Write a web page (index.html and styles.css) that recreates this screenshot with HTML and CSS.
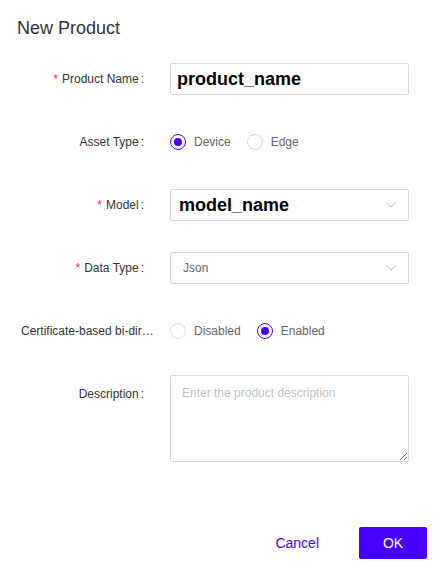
FILE: index.html
```html
<!DOCTYPE html>
<html lang="en">
<head>
<meta charset="utf-8">
<title>New Product</title>
<link rel="stylesheet" href="styles.css">
</head>
<body>
<div class="modal">
  <div class="title">New Product</div>
  <div class="form">
    <div class="row">
      <div class="label req">Product Name</div>
      <div class="control">
        <div class="box value value-input">product_name</div>
      </div>
    </div>
    <div class="row">
      <div class="label">Asset Type</div>
      <div class="control radios">
        <span class="radio"><span class="dot checked"></span><span class="rtext">Device</span></span>
        <span class="radio"><span class="dot"></span><span class="rtext">Edge</span></span>
      </div>
    </div>
    <div class="row">
      <div class="label req">Model</div>
      <div class="control">
        <div class="box select">
          <span class="value value-select">model_name</span>
          <svg class="arrow" width="10" height="6" viewBox="0 0 10 6"><path d="M0.5 0.5 L5 5 L9.5 0.5" fill="none" stroke="#bfbfbf" stroke-width="1"/></svg>
        </div>
      </div>
    </div>
    <div class="row">
      <div class="label req">Data Type</div>
      <div class="control">
        <div class="box select">
          <span class="plain">Json</span>
          <svg class="arrow" width="10" height="6" viewBox="0 0 10 6"><path d="M0.5 0.5 L5 5 L9.5 0.5" fill="none" stroke="#bfbfbf" stroke-width="1"/></svg>
        </div>
      </div>
    </div>
    <div class="row">
      <div class="label" title="Certificate-based bi-directional authentication">Certificate-based bi-directional authentication</div>
      <div class="control radios">
        <span class="radio"><span class="dot"></span><span class="rtext">Disabled</span></span>
        <span class="radio"><span class="dot checked"></span><span class="rtext">Enabled</span></span>
      </div>
    </div>
    <div class="row row-desc">
      <div class="label">Description</div>
      <div class="control">
        <textarea class="textarea" placeholder="Enter the product description"></textarea>
      </div>
    </div>
  </div>
  <div class="footer">
    <button class="btn btn-link">Cancel</button>
    <button class="btn btn-primary">OK</button>
  </div>
</div>
</body>
</html>
```

FILE: styles.css
```css
html, body {
  margin: 0;
  padding: 0;
  background: #ffffff;
}

body {
  font-family: "Liberation Sans", Arial, sans-serif;
  color: #333333;
}

.modal {
  width: 443px;
}

.title {
  padding: 16px 17px 0;
  font-size: 18px;
  line-height: 24px;
  color: #333333;
}

.form {
  margin-top: 23px;
  display: flex;
  flex-direction: column;
  gap: 31px;
}

.row {
  display: flex;
  align-items: flex-start;
}

.row-desc {
  margin-top: -3px;
}

.row-desc .label {
  margin-top: 3px;
}

.label {
  box-sizing: border-box;
  margin-left: 21px;
  width: 135px;
  flex: none;
  text-align: right;
  font-size: 12px;
  line-height: 32px;
  height: 32px;
  color: #333333;
  white-space: nowrap;
  overflow: hidden;
  text-overflow: ellipsis;
}

.label::after {
  content: ":";
  margin: 0 12px 0 2px;
}

.req::before {
  content: "*";
  color: #f5226d;
  margin-right: 4px;
  font-size: 12px;
}

.control {
  margin-left: 14px;
  width: 239px;
  flex: none;
}

.box {
  box-sizing: border-box;
  height: 32px;
  border: 1px solid #d9d9d9;
  border-radius: 2px;
  display: flex;
  align-items: center;
}

.value {
  font-size: 18px;
  font-weight: bold;
  color: #000000;
}

.value-input {
  padding-left: 6px;
}

.select {
  justify-content: space-between;
  padding-left: 8px;
  padding-right: 12px;
}

.select .plain {
  padding-left: 4px;
  font-size: 12px;
  color: #666666;
}

.arrow {
  display: block;
  flex: none;
}

.radios {
  display: flex;
  align-items: center;
  height: 32px;
}

.radio {
  display: inline-flex;
  align-items: center;
  margin-right: 8px;
}

.dot {
  box-sizing: border-box;
  width: 16px;
  height: 16px;
  border: 1px solid #d9d9d9;
  border-radius: 50%;
  display: inline-flex;
  align-items: center;
  justify-content: center;
  background: #ffffff;
}

.dot.checked {
  border-color: #4600ff;
}

.dot.checked::after {
  content: "";
  width: 8px;
  height: 8px;
  border-radius: 50%;
  background: #4600ff;
}

.rtext {
  padding: 0 8px;
  font-size: 12px;
  color: #666666;
}

.textarea {
  display: block;
  box-sizing: border-box;
  width: 239px;
  height: 87px;
  margin: 0;
  border: 1px solid #d9d9d9;
  border-radius: 2px;
  padding: 8px 11px 6px;
  font-family: "Liberation Sans", Arial, sans-serif;
  font-size: 12px;
  line-height: 18.86px;
  color: #333333;
  outline: none;
}

.textarea::placeholder {
  color: #bfbfbf;
}

.footer {
  margin-top: 65px;
  display: flex;
  justify-content: flex-end;
  align-items: center;
  gap: 24px;
  padding-right: 16px;
}

.btn {
  height: 32px;
  font-family: "Liberation Sans", Arial, sans-serif;
  font-size: 14px;
  border: none;
  border-radius: 2px;
  cursor: pointer;
}

.btn-link {
  background: transparent;
  color: #4600ff;
  padding: 0 16px;
}

.btn-primary {
  width: 68px;
  background: #4600ff;
  color: #ffffff;
  padding: 0;
}
```
